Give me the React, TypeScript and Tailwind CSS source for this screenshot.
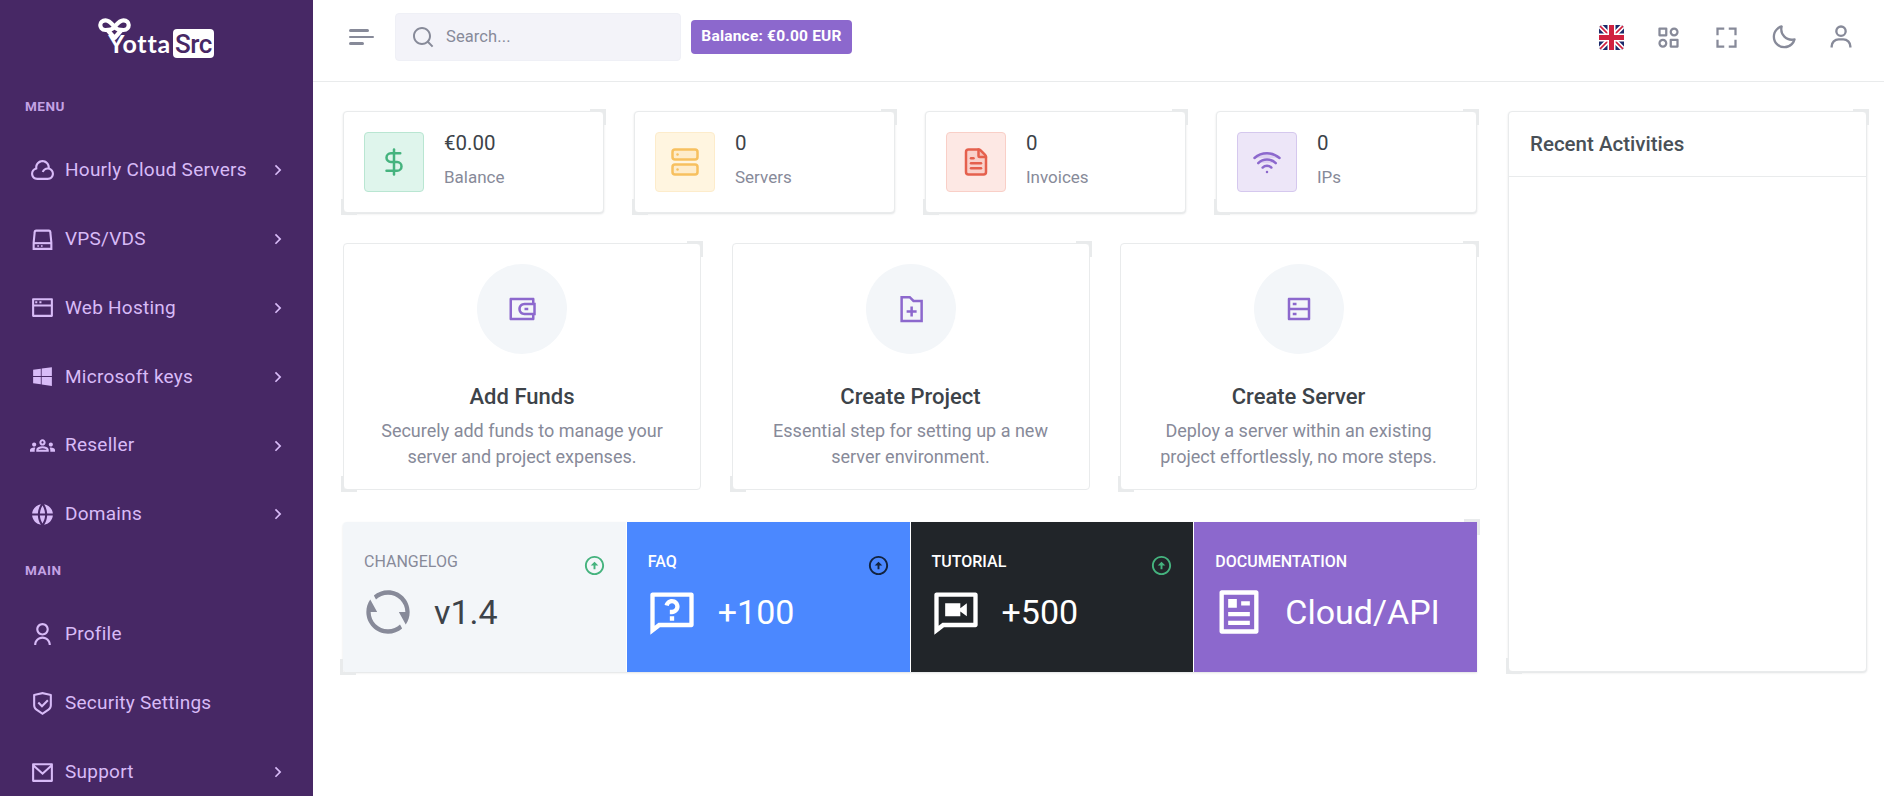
import React from "react";
import {
  RiCloudLine, RiWindowLine, RiWindowsFill, RiGlobalFill, RiUserLine,
  RiShieldCheckLine, RiMailLine, RiArrowRightSLine, RiSearchLine,
  RiWallet3Line, RiServerLine, RiRefreshLine, RiQuestionnaireLine,
  RiVideoChatLine, RiArticleLine, RiArrowUpCircleLine,
} from "react-icons/ri";
import { BiCategoryAlt, BiFullscreen, BiMoon, BiUser } from "react-icons/bi";
import { MdOutlineGroups } from "react-icons/md";
import { DollarSign, Server, FileText, Wifi } from "lucide-react";

function DriveIcon({ size = 24, className }: { size?: number; className?: string }) {
  return (
    <svg viewBox="0 0 24 24" width={size} height={size} className={className} fill="none" stroke="currentColor" strokeWidth="2">
      <path d="M6 3.5 h12 a1.5 1.5 0 0 1 1.5 1.5 L20.5 15 V21 H3.5 V15 L4.5 5 A1.5 1.5 0 0 1 6 3.5 Z" />
      <path d="M3.5 15.5 H20.5" />
      <path d="M7 18.2 h1.6 M10.5 18.2 h1.6" strokeWidth="1.6" />
    </svg>
  );
}

function FolderPlusIcon({ size = 24, className }: { size?: number; className?: string }) {
  return (
    <svg viewBox="0 0 24 24" width={size} height={size} className={className} fill="none" stroke="currentColor" strokeWidth="2">
      <path d="M4.5 2.5 H11 L14 5.5 H20.5 V21.5 H4.5 Z" />
      <path d="M12.5 10 V18 M8.5 14 H16.5" />
    </svg>
  );
}

const menu = [
  { label: "Hourly Cloud Servers", Icon: RiCloudLine, arrow: true },
  { label: "VPS/VDS", Icon: DriveIcon, arrow: true },
  { label: "Web Hosting", Icon: RiWindowLine, arrow: true },
  { label: "Microsoft keys", Icon: RiWindowsFill, arrow: true },
  { label: "Reseller", Icon: MdOutlineGroups, arrow: true },
  { label: "Domains", Icon: RiGlobalFill, arrow: true },
];
const main = [
  { label: "Profile", Icon: RiUserLine, arrow: false },
  { label: "Security Settings", Icon: RiShieldCheckLine, arrow: false },
  { label: "Support", Icon: RiMailLine, arrow: true },
];

function NavItem({ label, Icon, arrow }: { label: string; Icon: any; arrow: boolean }) {
  return (
    <div className="flex h-[68.8px] items-center pr-[25px] pl-[29.5px] text-[#d8bbf7]">
      <Icon size={25} className="shrink-0" />
      <span className="ml-[10.5px] flex-1 text-[19px] tracking-[0.25px] whitespace-nowrap">{label}</span>
      {arrow && <RiArrowRightSLine size={20} className="shrink-0" />}
    </div>
  );
}

function Label({ children, className }: { children: React.ReactNode; className: string }) {
  return (
    <div className={`h-[20px] pl-[25px] text-[13.5px] leading-[20px] font-bold tracking-[0.5px] text-[#c3a2e4] ${className}`}>
      {children}
    </div>
  );
}

function Logo() {
  return (
    <div className="relative ml-[99px] h-[40px] w-[115px] pt-[11px]">
      <svg viewBox="0 0 33 24" className="absolute top-0 -left-[1px] h-[24px] w-[33px]" fill="none" stroke="#fff" strokeWidth="4.2" strokeLinejoin="round">
        <path d="M7.5 12 C3.5 12 2.3 9 2.3 7 C2.3 4.5 4.3 2.4 7.5 2.4 C11.5 2.4 14 6 16.5 9 C19 12 21.5 12 25.5 12 C29 12 30.7 9.5 30.7 7 C30.7 4.5 28.8 2.4 25.5 2.4 C21.5 2.4 19 6 16.5 9 C14 12 11.5 12 7.5 12 Z" />
        <path d="M9.5 12 L16.5 20 L23.5 12" />
      </svg>
      <div className="flex items-center justify-end">
        <span className="mr-[2px] text-[25px] leading-[29px] font-bold tracking-[0.8px] text-white [font-family:Lato,sans-serif]">Yotta</span>
        <span className="flex h-[29px] w-[41px] items-center justify-center rounded-[4px] bg-white text-[26px] leading-none font-medium tracking-[-0.4px] text-[#472865]">Src</span>
      </div>
    </div>
  );
}

function Sidebar() {
  return (
    <aside className="h-[796px] w-[313px] shrink-0 overflow-hidden bg-[#472865]">
      <div className="h-[96px] pt-[18px]">
        <Logo />
      </div>
      <Label className="mb-[20px]">MENU</Label>
      {menu.map((m) => <NavItem key={m.label} {...m} />)}
      <Label className="mt-[11px] mb-[20.5px]">MAIN</Label>
      {main.map((m) => <NavItem key={m.label} {...m} />)}
    </aside>
  );
}

function Flag() {
  return (
    <svg viewBox="0 0 25 25" className="h-[25px] w-[25px] rounded-[4px]">
      <rect width="25" height="25" fill="#1b2a6b" />
      <path d="M0 0 L25 25 M25 0 L0 25" stroke="#fff" strokeWidth="5" />
      <path d="M0 0 L25 25 M25 0 L0 25" stroke="#d0213f" strokeWidth="1.6" />
      <path d="M12.5 0 V25 M0 12.5 H25" stroke="#fff" strokeWidth="8" />
      <path d="M12.5 0 V25 M0 12.5 H25" stroke="#d0213f" strokeWidth="5" />
    </svg>
  );
}

function HeaderIcon({ children }: { children: React.ReactNode }) {
  return <div className="flex w-[57.5px] justify-center">{children}</div>;
}

function Header() {
  return (
    <header className="flex h-[82px] items-center border-b border-[#e9ebec] pr-[14px] pb-[7px] pl-[36px]">
      <div className="flex w-[25px] flex-col gap-[4px]">
        <div className="h-[3px] w-[20px] rounded-full bg-[#878a99]" />
        <div className="h-[2px] w-[25px] rounded-full bg-[#878a99]" />
        <div className="h-[3px] w-[15px] rounded-full bg-[#878a99]" />
      </div>
      <div className="ml-[21px] flex h-[48px] w-[286px] items-center rounded-[4px] border border-[#eff0f6] bg-[#f3f3f9] pl-[15px]">
        <RiSearchLine size={24} className="text-[#878a99]" />
        <span className="ml-[11px] text-[16.5px] tracking-[0.1px] text-[#878a99]">Search...</span>
      </div>
      <div className="ml-[10px] flex h-[34px] w-[161px] items-center justify-center rounded-[4px] bg-[#8c68cd] text-[15.5px] font-bold tracking-[0.2px] whitespace-nowrap text-white">
        Balance: €0.00 EUR
      </div>
      <div className="ml-auto flex items-center text-[#878a99]">
        <HeaderIcon><Flag /></HeaderIcon>
        <HeaderIcon><BiCategoryAlt size={27} /></HeaderIcon>
        <HeaderIcon><BiFullscreen size={27} /></HeaderIcon>
        <HeaderIcon><BiMoon size={28} /></HeaderIcon>
        <HeaderIcon><BiUser size={28} /></HeaderIcon>
      </div>
    </header>
  );
}

function Corners() {
  return (
    <>
      <div className="absolute -top-[3px] -right-[3px] h-[16px] w-[16px] border-t-[3px] border-r-[3px] border-[#e9ebec]" />
      <div className="absolute -bottom-[3px] -left-[3px] h-[16px] w-[16px] border-b-[3px] border-l-[3px] border-[#e9ebec]" />
    </>
  );
}

const stats = [
  { value: "€0.00", label: "Balance", Icon: DollarSign, box: "bg-[#dff5ec] border-[#b9e6d2] text-[#45b37e]" },
  { value: "0", label: "Servers", Icon: Server, box: "bg-[#fff5e0] border-[#fdeccb] text-[#f7c05f]" },
  { value: "0", label: "Invoices", Icon: FileText, box: "bg-[#fde8e4] border-[#f9cfc7] text-[#e5604d]" },
  { value: "0", label: "IPs", Icon: Wifi, box: "bg-[#ede6f8] border-[#d5c8ee] text-[#8c68cd]" },
];

function StatCard({ value, label, Icon, box }: (typeof stats)[number]) {
  return (
    <div className="relative flex h-[102px] w-[261px] items-center rounded-[4px] border border-[#e9ebec] bg-white pl-[20px] shadow-[0_1px_2px_rgba(56,65,74,0.15)]">
      <Corners />
      <div className={`flex h-[60px] w-[60px] shrink-0 items-center justify-center rounded-[4px] border ${box}`}>
        <Icon size={30} strokeWidth={2} fill="currentColor" fillOpacity={Icon === DollarSign ? 0 : 0.16} />
      </div>
      <div className="ml-[20px] flex -translate-y-[2px] flex-col">
        <div className="text-[20.5px] leading-[24px] text-[#3d4349]">{value}</div>
        <div className="mt-[10px] text-[17px] leading-[24px] text-[#878a99]">{label}</div>
      </div>
    </div>
  );
}

const actions = [
  { title: "Add Funds", Icon: RiWallet3Line, l1: "Securely add funds to manage your", l2: "server and project expenses." },
  { title: "Create Project", Icon: FolderPlusIcon, l1: "Essential step for setting up a new", l2: "server environment." },
  { title: "Create Server", Icon: RiServerLine, l1: "Deploy a server within an existing", l2: "project effortlessly, no more steps." },
];

function ActionCard({ title, Icon, l1, l2 }: (typeof actions)[number]) {
  return (
    <div className="relative flex h-[247px] w-[358px] flex-col items-center rounded-[4px] border border-[#e9ebec] bg-white pt-[20px] last:w-[357px]">
      <Corners />
      <div className="flex h-[90px] w-[90px] items-center justify-center rounded-full bg-[#f3f6f9] text-[#8c68cd]">
        <Icon size={30} />
      </div>
      <div className="mt-[29px] text-[22px] leading-[28px] font-medium text-[#3d4349]">{title}</div>
      <div className="mt-[7px] text-center text-[18px] leading-[26px] text-[#878a99]">
        <div>{l1}</div>
        <div>{l2}</div>
      </div>
    </div>
  );
}

const tiles = [
  { title: "CHANGELOG", value: "v1.4", Icon: RiRefreshLine, bg: "bg-[#f3f6f9]", titleC: "text-[#878a99] font-normal", valueC: "text-[#3d4349]", iconC: "text-[#878a99]", upC: "text-[#45b37e]", up: true },
  { title: "FAQ", value: "+100", Icon: RiQuestionnaireLine, bg: "bg-[#4b88ff]", titleC: "text-white font-medium", valueC: "text-white", iconC: "text-white", upC: "text-[#12233f]", up: true },
  { title: "TUTORIAL", value: "+500", Icon: RiVideoChatLine, bg: "bg-[#212529]", titleC: "text-white font-medium", valueC: "text-white", iconC: "text-white", upC: "text-[#45b37e]", up: true },
  { title: "DOCUMENTATION", value: "Cloud/API", Icon: RiArticleLine, bg: "bg-[#8c68cd]", titleC: "text-white font-medium", valueC: "text-white", iconC: "text-white", upC: "", up: false },
];

function Tile({ title, value, Icon, bg, titleC, valueC, iconC, upC, up }: (typeof tiles)[number]) {
  return (
    <div className={`flex h-full flex-1 flex-col border-r border-white pt-[28px] pr-[20px] pl-[21px] last:border-r-0 ${bg}`}>
      <div className="flex h-[24px] items-center justify-between">
        <span className={`text-[16px] ${titleC}`}>{title}</span>
        {up && <RiArrowUpCircleLine size={23} className={`translate-y-[3px] ${upC}`} />}
      </div>
      <div className="mt-[12px] flex items-center">
        <Icon size={52} className={`-ml-[2px] shrink-0 ${iconC}`} />
        <span className={`ml-[20px] text-[34px] leading-[52px] font-normal whitespace-nowrap ${valueC}`}>{value}</span>
      </div>
    </div>
  );
}

export default function App() {
  return (
    <div className="flex h-[796px] w-full overflow-hidden bg-white [font-family:Roboto,sans-serif]">
      <Sidebar />
      <div className="min-w-0 flex-1">
        <Header />
        <main className="flex gap-[31px] pt-[29px] pr-[17px] pl-[30px]">
          <div className="flex w-[1134px] flex-col">
            <div className="flex justify-between">
              {stats.map((s) => <StatCard key={s.label} {...s} />)}
            </div>
            <div className="mt-[30px] flex gap-[30.5px]">
              {actions.map((a) => <ActionCard key={a.title} {...a} />)}
            </div>
            <div className="relative mt-[32px] h-[150px] rounded-l-[4px] shadow-[0_1px_2px_rgba(56,65,74,0.15)]">
              <div className="absolute -top-[3px] -right-[3px] h-[16px] w-[16px] border-t-[3px] border-r-[3px] border-[#e9ebec]" />
              <div className="absolute -bottom-[3px] -left-[3px] h-[16px] w-[16px] border-b-[3px] border-l-[3px] border-[#e9ebec]" />
              <div className="relative flex h-full overflow-hidden rounded-l-[4px]">
                {tiles.map((t) => <Tile key={t.title} {...t} />)}
              </div>
            </div>
          </div>
          <div className="relative h-[561px] w-[359px] rounded-[4px] border border-[#e9ebec] bg-white shadow-[0_1px_2px_rgba(56,65,74,0.15)]">
            <Corners />
            <div className="flex h-[65px] items-center border-b border-[#e9ebec] pl-[21px] text-[20.5px] font-medium text-[#495057]">
              Recent Activities
            </div>
          </div>
        </main>
      </div>
    </div>
  );
}
